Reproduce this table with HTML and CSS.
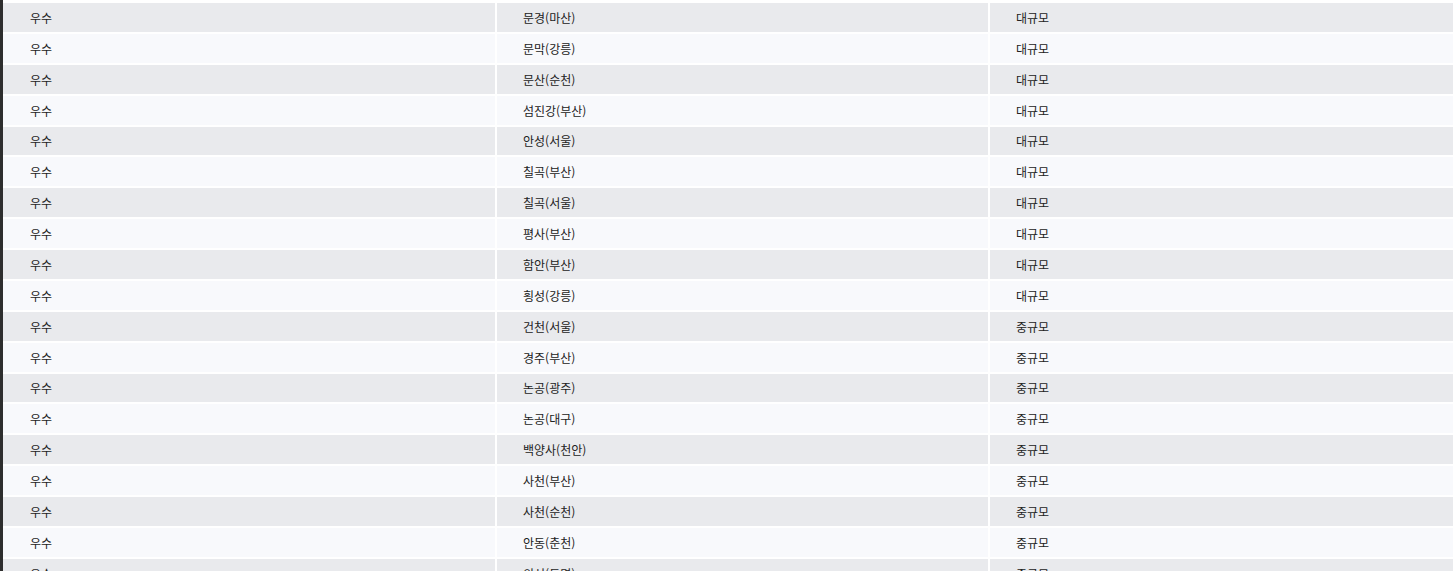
FILE: index.html
```html
<!DOCTYPE html>
<html lang="ko">
<head>
<meta charset="utf-8">
<title>목록</title>
<link rel="stylesheet" href="styles.css">
</head>
<body>
<div class="page">
  <div class="side-strip"></div>
  <div class="table-wrap">
    <div class="table">
      <div class="row even"><div class="cell">우수</div><div class="cell">문경(마산)</div><div class="cell">대규모</div></div>
      <div class="row odd"><div class="cell">우수</div><div class="cell">문막(강릉)</div><div class="cell">대규모</div></div>
      <div class="row even"><div class="cell">우수</div><div class="cell">문산(순천)</div><div class="cell">대규모</div></div>
      <div class="row odd"><div class="cell">우수</div><div class="cell">섬진강(부산)</div><div class="cell">대규모</div></div>
      <div class="row even"><div class="cell">우수</div><div class="cell">안성(서울)</div><div class="cell">대규모</div></div>
      <div class="row odd"><div class="cell">우수</div><div class="cell">칠곡(부산)</div><div class="cell">대규모</div></div>
      <div class="row even"><div class="cell">우수</div><div class="cell">칠곡(서울)</div><div class="cell">대규모</div></div>
      <div class="row odd"><div class="cell">우수</div><div class="cell">평사(부산)</div><div class="cell">대규모</div></div>
      <div class="row even"><div class="cell">우수</div><div class="cell">함안(부산)</div><div class="cell">대규모</div></div>
      <div class="row odd"><div class="cell">우수</div><div class="cell">횡성(강릉)</div><div class="cell">대규모</div></div>
      <div class="row even"><div class="cell">우수</div><div class="cell">건천(서울)</div><div class="cell">중규모</div></div>
      <div class="row odd"><div class="cell">우수</div><div class="cell">경주(부산)</div><div class="cell">중규모</div></div>
      <div class="row even"><div class="cell">우수</div><div class="cell">논공(광주)</div><div class="cell">중규모</div></div>
      <div class="row odd"><div class="cell">우수</div><div class="cell">논공(대구)</div><div class="cell">중규모</div></div>
      <div class="row even"><div class="cell">우수</div><div class="cell">백양사(천안)</div><div class="cell">중규모</div></div>
      <div class="row odd"><div class="cell">우수</div><div class="cell">사천(부산)</div><div class="cell">중규모</div></div>
      <div class="row even"><div class="cell">우수</div><div class="cell">사천(순천)</div><div class="cell">중규모</div></div>
      <div class="row odd"><div class="cell">우수</div><div class="cell">안동(춘천)</div><div class="cell">중규모</div></div>
      <div class="row even"><div class="cell">우수</div><div class="cell">의성(동명)</div><div class="cell">중규모</div></div>
    </div>
  </div>
</div>
</body>
</html>
```

FILE: styles.css
```css
html, body {
  margin: 0;
  padding: 0;
  background: #ffffff;
  overflow: hidden;
}

body {
  font-family: "Noto Sans CJK KR", "Noto Sans", sans-serif;
  font-size: 12px;
  color: #222222;
}

.page {
  display: flex;
  height: 571px;
}

.side-strip {
  width: 3px;
  flex: none;
  background: #2e2e2e;
}

.table-wrap {
  flex: 1;
  overflow: hidden;
  padding-top: 3px;
}

.table {
  display: flex;
  flex-direction: column;
  gap: 2px;
  width: 1480px;
}

.row {
  display: grid;
  grid-template-columns: 492px 491px 493px;
  column-gap: 2px;
  height: 28.88px;
}

.cell {
  display: flex;
  align-items: center;
  padding-left: 27px;
  padding-top: 1px;
  line-height: 1;
}

.row .cell + .cell {
  padding-left: 26px;
}

.row.even .cell {
  background: #e9eaed;
}

.row.odd .cell {
  background: #f8f9fc;
}
```
